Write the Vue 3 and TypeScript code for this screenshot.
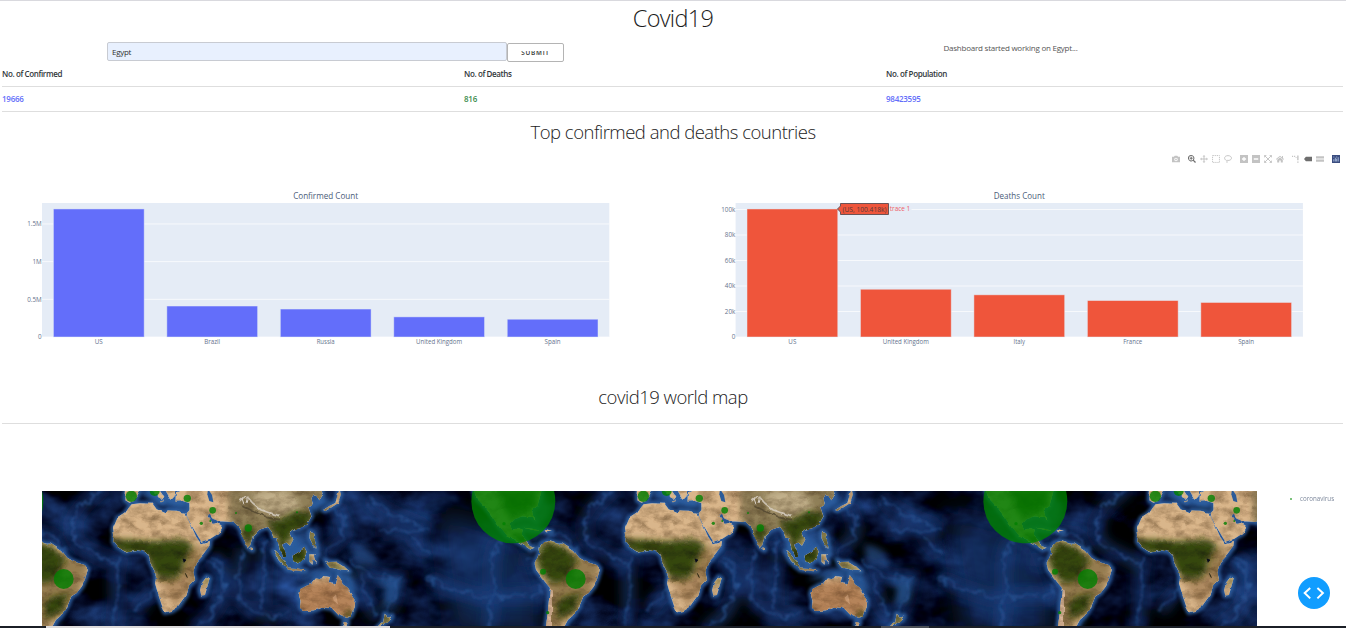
<script setup lang="ts">
interface Datum { name: string; value: number }
interface Tick { label: string; value: number }
interface Chart {
  title: string
  color: string
  left: number
  max: number
  bars: Datum[]
  ticks: Tick[]
}

const stats = [
  { label: 'No. of Confirmed', value: '19666', tone: 'blue' },
  { label: 'No. of Deaths', value: '816', tone: 'green' },
  { label: 'No. of Population', value: '98423595', tone: 'blue' },
]

const charts: Chart[] = [
  {
    title: 'Confirmed Count', color: '#636efa', left: 42, max: 1.778,
    bars: [
      { name: 'US', value: 1.699 }, { name: 'Brazil', value: 0.411 }, { name: 'Russia', value: 0.371 },
      { name: 'United Kingdom', value: 0.267 }, { name: 'Spain', value: 0.236 },
    ],
    ticks: [{ label: '0', value: 0 }, { label: '0.5M', value: 0.5 }, { label: '1M', value: 1 }, { label: '1.5M', value: 1.5 }],
  },
  {
    title: 'Deaths Count', color: '#ef553b', left: 62.6, max: 105.1,
    bars: [
      { name: 'US', value: 100.418 }, { name: 'United Kingdom', value: 37.46 }, { name: 'Italy', value: 33.07 },
      { name: 'France', value: 28.6 }, { name: 'Spain', value: 27.1 },
    ],
    ticks: [
      { label: '0', value: 0 }, { label: '20k', value: 20 }, { label: '40k', value: 40 },
      { label: '60k', value: 60 }, { label: '80k', value: 80 }, { label: '100k', value: 100 },
    ],
  },
]
const plotTop = 35
const plotH = 134
const plotW = 567.3
const step = plotW / 5
const yOf = (c: Chart, v: number) => plotTop + plotH - (v / c.max) * plotH
const labelWidth: Record<string, number> = { US: 8, Brazil: 16, Russia: 18, 'United Kingdom': 46, Spain: 16, Italy: 11.5, France: 19 }

/* World map: one world is 1536 units wide, a third of a pixel each. */
const WORLD = 1536
const grounds = [0, WORLD, WORLD * 2]
const worlds = [-WORLD, 0, WORLD, WORLD * 2]

const lands = [
  // Africa
  'M269 40L294 37L332 38L344 55L372 67L377 58L404 59L429 65L436 80L449 107L463 138L476 157L504 150L502 168L484 192L461 217L454 242L459 267L440 287L434 312L409 347L389 360L369 364L361 347L349 312L339 277L342 257L336 237L326 217L321 195L309 182L284 177L249 182L226 167L214 152L216 132L213 112L226 82L249 67L262 48Z',
  // Madagascar
  'M494 257L503 262L489 312L478 314L474 298L480 275Z',
  // Iberia and southern Europe
  'M252 -6L292 -6L286 14L276 30L262 35L250 28Z',
  'M322 -6L350 -6L364 14L356 24L344 9Z',
  'M368 -6L400 -6L398 16L388 26L378 12Z',
  'M356 26L366 26L363 33L354 30Z',
  // Anatolia, Arabia, Iran and India
  'M402 4L430 -6L700 -6L700 110L676 108L652 116L632 136L625 162L618 170L607 148L594 112L578 95L560 92L530 91L512 83L499 68L494 76L512 98L527 96L542 107L532 126L505 143L478 152L468 136L450 106L436 78L434 66L442 58L442 36L424 31L400 32Z',
  // East and South-East Asia
  'M650 -6L838 -6L842 12L832 28L824 12L815 10L808 22L812 38L800 52L808 76L794 101L774 112L749 116L746 128L754 146L744 164L730 152L720 158L728 176L733 194L724 196L713 176L706 142L694 140L688 120L678 108L655 114Z',
  'M844 57L862 45L880 36L889 4L893 -4L897 10L888 37L870 48L850 60Z',
  'M694 180L708 188L728 212L738 227L728 228L710 208Z',
  'M752 194L772 182L788 170L794 182L784 205L766 218L754 210Z',
  'M733 229L765 231L792 239L778 241L738 236Z',
  'M802 190L826 190L816 196L822 216L812 205L808 218L802 212Z',
  'M804 120L813 130L820 154L824 173L812 160L803 142Z',
  'M850 206L862 213L884 212L904 224L922 241L902 239L884 234L864 230L856 221Z',
  'M625 168L633 172L632 178L626 176Z',
  // Australia and New Zealand
  'M774 295L794 284L808 279L822 262L834 265L842 254L864 258L860 273L878 284L887 252L895 262L902 280L918 290L930 310L940 326L938 348L928 374L916 380L892 374L870 352L842 348L816 358L786 360L774 350L776 330L770 310Z',
  'M905 393L917 394L912 410L904 406Z',
  'M1028 368L1038 377L1050 374L1046 386L1030 394L1016 410L1006 410L1024 392Z',
  // North and Central America
  'M1294 -6L1500 -6L1486 46L1478 50L1470 66L1480 90L1470 78L1444 76L1418 84L1404 100L1412 118L1430 112L1442 116L1438 134L1450 145L1462 165L1478 171L1466 176L1444 161L1418 146L1394 136L1372 108L1346 70L1326 44L1304 22Z',
  // Caribbean
  'M1445 110L1474 114L1496 120L1478 118Z',
  'M1508 117L1530 122L1512 124Z',
  // South America
  'M1490 170L1504 154L1524 150L1548 158L1562 158L1596 180L1612 200L1632 212L1664 222L1674 234L1666 262L1656 286L1640 306L1624 316L1612 346L1592 374L1578 386L1560 420L1510 420L1518 362L1524 290L1512 277L1498 258L1482 236L1478 218L1486 200L1492 186Z',
]

const greens = [
  'M205 143L270 146L340 150L410 145L438 150L455 170L440 190L428 210L420 245L395 266L355 262L330 240L318 200L300 190L240 186L205 160Z',
  'M600 112L625 105L640 118L628 158L615 160L602 135Z',
  'M680 88L720 86L760 60L815 70L796 108L752 122L750 152L730 150L726 190L712 180L706 140L688 122Z',
  'M690 170L796 165L800 215L750 226L728 230Z',
  'M796 118L826 150L826 176L806 164Z',
  'M845 200L926 244L870 234Z',
  'M915 365L934 355L928 382L900 376Z',
  'M1020 370L1052 370L1020 412Z',
  'M1366 -6L1490 -6L1470 60L1400 75L1380 40Z',
  'M1410 124L1450 140L1466 175L1420 148Z',
  'M1486 180L1510 154L1560 162L1610 206L1590 232L1572 270L1534 278L1516 265L1484 222Z',
  'M1560 318L1618 306L1600 352L1556 386L1540 350Z',
  'M486 260L502 262L494 290Z',
]

const ridges = [
  'M190 -10C110 40 80 95 98 140C112 180 170 190 222 220',
  'M236 196C205 250 240 310 216 410',
  'M500 215C560 240 560 300 512 370C490 390 470 400 455 420',
  'M600 170C605 240 570 290 600 330C640 370 690 390 740 360',
  'M668 150C664 230 662 290 660 345',
  'M512 200C556 220 552 260 536 290',
  'M336 290C320 315 300 335 285 360',
  'M880 40C900 90 920 120 890 150C860 168 850 185 842 200',
  'M980 20C1020 60 1070 80 1160 115',
  'M1010 120L1080 115L1150 118M1110 140L1160 190',
  'M930 210C970 250 1010 270 1070 260L1056 330L1036 372',
  'M956 250C960 310 980 350 1010 380',
  'M1160 260C1200 290 1260 300 1310 320L1460 316',
  'M1370 150C1330 230 1370 330 1336 420',
  'M1440 206L1478 207M1470 335L1506 290',
  'M1474 160C1510 130 1540 125 1574 138C1582 160 1594 170 1612 182',
]

const cases = [
  { x: 268, y: 16, r: 17 }, { x: 338, y: 0, r: 15 }, { x: 436, y: 22, r: 11 },
  { x: 512, y: 58, r: 10 }, { x: 478, y: 97, r: 5 }, { x: 582, y: 66, r: 3 },
  { x: 619, y: 111, r: 11 }, { x: 765, y: 64, r: 3 }, { x: 1414, y: 31, r: 126 },
  { x: 1386, y: 98, r: 5 }, { x: 1503, y: 242, r: 9 }, { x: 1601, y: 264, r: 30 },
  { x: 1517, y: 365, r: 5 }, { x: 505, y: 90, r: 3 },
]
</script>

<template>
  <main class="page">
    <h1>Covid19</h1>
    <section class="controls">
      <form class="search" @submit.prevent>
        <input class="country" type="text" value="Egypt" />
        <button class="submit"><span>SUBMIT</span></button>
      </form>
      <p class="status">Dashboard started working on Egypt...</p>
    </section>

    <table class="stats">
      <colgroup><col class="c1" /><col class="c2" /><col /></colgroup>
      <thead><tr><th v-for="s in stats" :key="s.label">{{ s.label }}</th></tr></thead>
      <tbody><tr><td v-for="s in stats" :key="s.label" :class="s.tone">{{ s.value }}</td></tr></tbody>
    </table>

    <h2>Top confirmed and deaths countries</h2>

    <div class="modebar">
      <svg class="ic gap" viewBox="0 0 10 10"><path fill-rule="evenodd" d="M0 2.2h2.4L3.4.8h3.2l1 1.4H10v7H0zM5 3.4a2.2 2.2 0 1 0 0 4.4 2.2 2.2 0 0 0 0-4.4zm0 1.1a1.1 1.1 0 1 1 0 2.2 1.1 1.1 0 0 1 0-2.2z" /></svg>
      <svg class="ic on" viewBox="0 0 10 10"><path fill-rule="evenodd" d="M4 0a4 4 0 1 0 2.2 7.3L8.8 10 10 8.8 7.3 6.2A4 4 0 0 0 4 0zm0 1.2a2.8 2.8 0 1 1 0 5.6 2.8 2.8 0 0 1 0-5.6zM3.4 2.2v1.2H2.2v1.2h1.2v1.2h1.2V4.6h1.2V3.4H4.6V2.2z" /></svg>
      <svg class="ic" viewBox="0 0 10 10"><path d="M5 0l1.8 2H5.6v2.4H8V3.2L10 5 8 6.8V5.6H5.6V8h1.2L5 10 3.2 8h1.2V5.6H2v1.2L0 5l2-1.8v1.2h2.4V2H3.2z" /></svg>
      <svg class="ic" viewBox="0 0 10 10"><rect class="line dash" x=".7" y=".7" width="8.6" height="8.6" /></svg>
      <svg class="ic gap" viewBox="0 0 10 10"><path class="line" d="M3.2 6.8C-.6 5.5 0 .8 5 .8s6 5 1.3 5.9c-1.8.3-3-.5-2.8.8.2 1 .7 1 .2 2.3" /></svg>
      <svg class="ic" viewBox="0 0 10 10"><path fill-rule="evenodd" d="M0 0h10v10H0zM4.2 2.4v1.8H2.4v1.6h1.8v1.8h1.6V5.8h1.8V4.2H5.8V2.4z" /></svg>
      <svg class="ic" viewBox="0 0 10 10"><path fill-rule="evenodd" d="M0 0h10v10H0zM2.2 4.2v1.6h5.6V4.2z" /></svg>
      <svg class="ic" viewBox="0 0 10 10"><path class="line" d="M1 1l8 8M9 1L1 9M.5 3V.5H3M7 .5h2.5V3M.5 7v2.5H3M7 9.5h2.5V7" /></svg>
      <svg class="ic gap" viewBox="0 0 10 10"><path d="M5 .8L10 5l-.7.8L5 2.2.7 5.8 0 5zM7.5 1.2h1.2V4l-1.2-.8zM5 3L8.5 6v3.4H6V6.8H4v2.6H1.5V6z" /></svg>
      <svg class="ic" viewBox="0 0 10 10"><path d="M0 1h1.4v1.4H0zM2.6 1H4v1.4H2.6zM6.5 .5h1.7v6.2H6.5zM6.5 8h1.7v1.7H6.5zM4.6 2.5h1v1.2h-1z" /></svg>
      <svg class="ic on" viewBox="0 0 10 10"><path d="M0 5l2.4-2.7H10v5.4H2.4z" /></svg>
      <svg class="ic gap" viewBox="0 0 10 10"><path d="M0 1.5h10v2.8H0zM0 5.7h10v2.8H0z" /></svg>
      <svg class="ic logo" viewBox="0 0 10 10"><rect width="10" height="10" fill="#3b4d80" /><path d="M1.8 5.2h1V8h-1zM3.6 3.4h1V8h-1zM5.4 4.6h1V8h-1zM7.2 2.8h1V8h-1zM1.8 2h1v1h-1zM5.4 2h1v1h-1z" fill="#b9cdea" /></svg>
    </div>

    <section class="charts">
      <svg v-for="(c, ci) in charts" :key="c.title" class="chart" width="673" height="190" viewBox="0 0 673 190">
        <g :transform="`translate(${c.left} 0)`">
          <text class="chart-title" :x="plotW / 2" y="31" text-anchor="middle" :textLength="ci ? 51 : 65" lengthAdjust="spacingAndGlyphs">{{ c.title }}</text>
          <rect x="0" :y="plotTop" :width="plotW" :height="plotH" fill="#e5ecf6" />
          <g v-for="t in c.ticks" :key="t.label">
            <line x1="0" :x2="plotW" :y1="yOf(c, t.value)" :y2="yOf(c, t.value)" stroke="#fff" stroke-width=".7" />
            <text class="tick" x="-.3" :y="yOf(c, t.value) + 2.2" text-anchor="end">{{ t.label }}</text>
          </g>
          <g v-for="(b, i) in c.bars" :key="b.name">
            <rect :x="i * step + 11.4" :y="yOf(c, b.value)" :width="step * 0.8" :height="plotTop + plotH - yOf(c, b.value)" :fill="c.color" stroke="#e5ecf6" stroke-opacity=".6" stroke-width=".8" />
            <text class="tick" :x="(i + 0.5) * step" y="176" text-anchor="middle" :textLength="labelWidth[b.name]" lengthAdjust="spacingAndGlyphs">{{ b.name }}</text>
          </g>
          <g v-if="ci === 1">
            <path d="M101.9 41L104.9 38V35.5H152.9V46.5H104.9V44Z" fill="#ef553b" stroke="#6b5357" />
            <text class="hover" x="106.9" y="43.6" textLength="44" lengthAdjust="spacingAndGlyphs">(US, 100.418k)</text>
            <rect x="153.9" y="36" width="22" height="10" fill="#e5ecf6" />
            <text class="hover trace" x="154.2" y="43.4" textLength="20.5" lengthAdjust="spacingAndGlyphs">trace 1</text>
          </g>
        </g>
      </svg>
    </section>

    <h2 class="map-title">covid19 world map</h2>
    <hr />

    <section class="map-row">
      <svg class="map" width="1215" height="135" viewBox="0 0 3645 405">
        <defs>
          <filter id="sea" x="0" y="0" width="100%" height="100%" color-interpolation-filters="sRGB">
            <feTurbulence type="fractalNoise" baseFrequency=".006 .009" numOctaves="4" seed="12" />
            <feColorMatrix values=".3 0 0 0 -.13  .6 0 0 0 -.25  1.0 0 0 0 -.34  0 0 0 0 1" />
          </filter>
          <filter id="grain" x="0" y="-20" width="1720" height="460" filterUnits="userSpaceOnUse" color-interpolation-filters="sRGB">
            <feTurbulence type="fractalNoise" baseFrequency=".025 .04" numOctaves="4" seed="5" result="n" />
            <feColorMatrix in="n" values=".6 0 0 0 .63  .65 0 0 0 .59  .75 0 0 0 .52  0 0 0 0 1" result="m" />
            <feBlend in="SourceGraphic" in2="m" mode="multiply" result="b" />
            <feComposite in="b" in2="SourceGraphic" operator="in" />
          </filter>
          <filter id="rough" x="0" y="-20" width="1720" height="460" filterUnits="userSpaceOnUse">
            <feTurbulence type="fractalNoise" baseFrequency=".035" numOctaves="3" seed="8" />
            <feDisplacementMap in="SourceGraphic" scale="10" xChannelSelector="R" yChannelSelector="G" />
            <feGaussianBlur stdDeviation="1" />
          </filter>
          <filter id="ridge" x="0" y="-20" width="1720" height="460" filterUnits="userSpaceOnUse">
            <feTurbulence type="fractalNoise" baseFrequency=".03" numOctaves="3" seed="3" />
            <feDisplacementMap in="SourceGraphic" scale="45" xChannelSelector="R" yChannelSelector="G" />
            <feGaussianBlur stdDeviation="3.5" />
          </filter>
          <filter id="soft" x="-30%" y="-30%" width="160%" height="160%"><feGaussianBlur stdDeviation="9" /></filter>
          <filter id="haze" x="1000" y="-80" width="640" height="600" filterUnits="userSpaceOnUse"><feGaussianBlur stdDeviation="40" /></filter>
          <filter id="broad" x="0" y="-60" width="1760" height="560" filterUnits="userSpaceOnUse"><feGaussianBlur stdDeviation="16" /></filter>
          <filter id="halo" x="-20" y="-40" width="1760" height="500" filterUnits="userSpaceOnUse"><feGaussianBlur stdDeviation="4" /></filter>
          <clipPath id="coast"><path v-for="d in lands" :key="d" :d="d" /></clipPath>
          <g id="shelves">
            <path d="M1180 60L1440 130L1500 300L1500 430L1230 430Z" fill="#14366a" opacity=".75" filter="url(#haze)" />
            <g filter="url(#broad)" fill="none" stroke="#1a4080" stroke-opacity=".6" stroke-width="40">
              <path v-for="d in ridges" :key="d" :d="d" />
            </g>
            <g filter="url(#ridge)" fill="none" stroke="#2c5c9c" stroke-opacity=".6" stroke-width="6">
              <path v-for="d in ridges" :key="d" :d="d" />
            </g>
            <g filter="url(#soft)" fill="#2b5c9d">
              <path d="M690 150L760 130L800 180L770 235L700 210Z" />
              <path d="M790 30L840 10L870 30L812 70Z" />
              <path d="M750 120L830 110L840 200L800 220L760 190Z" opacity=".6" />
              <path d="M760 265L820 235L860 232L930 250L950 310L925 300L885 255Z" />
              <path d="M930 160C980 165 1010 190 1000 225L940 215Z" opacity=".6" />
              <path d="M990 265L1080 262L1060 330L1020 350L1030 290Z" opacity=".7" />
              <path d="M1590 365L1610 350L1575 410L1545 415Z" />
              <path d="M280 -6L430 -6L440 60L340 40Z" />
              <path d="M1410 70L1500 0L1530 60L1480 140L1410 130Z" opacity=".7" />
            </g>
            <g filter="url(#halo)" fill="#2d5f9f" stroke="#2d5f9f" stroke-width="16" stroke-linejoin="round" opacity=".9">
              <path v-for="d in lands" :key="d" :d="d" />
            </g>
          </g>
          <g id="continents">
            <g filter="url(#rough)">
              <g filter="url(#grain)">
                <g clip-path="url(#coast)">
                  <rect y="-10" width="1720" height="430" fill="#d9b68b" />
                  <path d="M560 -10H860V130H560Z" fill="#8f7f58" filter="url(#soft)" />
                  <path d="M630 10L690 -6L760 12L775 60L700 75L650 55Z" fill="#c2b18c" filter="url(#soft)" />
                  <path d="M1290 -10H1500V180H1360Z" fill="#a4a26a" filter="url(#soft)" />
                  <path d="M1550 190L1680 210L1640 320L1540 420H1500L1520 290Z" fill="#957b4f" filter="url(#soft)" />
                  <path d="M760 280L900 265L950 330L920 390L760 370Z" fill="#b5845a" filter="url(#soft)" />
                  <path d="M420 190L480 160L470 270L430 310Z" fill="#9b7e50" filter="url(#soft)" />
                  <path d="M350 255L450 240L440 310L400 350L370 300Z" fill="#b08c62" filter="url(#soft)" />
                  <g fill="#34460a" filter="url(#soft)"><path v-for="d in greens" :key="d" :d="d" /></g>
                  <path d="M1516 280L1530 300L1530 410H1512Z" fill="#d8b699" />
                </g>
              </g>
              <path d="M592 30L606 18L620 22L632 36L656 56L690 68L714 74" fill="none" stroke="#ddd6cc" stroke-width="5" stroke-opacity=".75" />
              <path d="M600 22L606 40M618 16L612 36" fill="none" stroke="#ddd6cc" stroke-width="3" />
              <path d="M604 46L640 64L676 80L714 86" fill="none" stroke="#4b422c" stroke-width="5" stroke-opacity=".7" />
            </g>
            <path d="M498 -6L510 12L514 34L502 30L496 10Z" fill="#2c5b99" />
            <path d="M872 320L882 310L888 340L876 330Z" fill="#edc09a" opacity=".4" />
            <path d="M423 204L432 207L426 214Z" fill="#050818" stroke="#050818" stroke-width="2" />
            <path d="M430 247L436 260" stroke="#26240f" stroke-width="3" />
          </g>
        </defs>
        <rect width="3645" height="405" fill="#02031a" />
        <g class="water">
          <rect v-for="x in grounds" :key="x" :x="x" y="0" :width="WORLD" height="405" filter="url(#sea)" />
        </g>
        <use v-for="x in worlds" :key="'s' + x" href="#shelves" :x="x" />
        <use v-for="x in worlds" :key="'c' + x" href="#continents" :x="x" />
        <g v-for="x in worlds" :key="'d' + x" fill="#008000" fill-opacity=".8">
          <circle v-for="(c, i) in cases" :key="i" :cx="x + c.x" :cy="c.y" :r="c.r" />
        </g>
      </svg>
      <div class="legend"><i></i><span>coronavirus</span></div>
    </section>

    <footer class="taskbar"><i class="dark start"></i><i class="light"></i><i class="dark rest"></i><i class="grey"></i><i class="dark end"></i></footer>

    <button class="debug" aria-label="Debug menu">
      <svg width="32" height="32" viewBox="0 0 32 32"><path d="M12.2 11L6.7 16l5.5 5.4M19.4 11l5.5 5-5.5 5.4" fill="none" stroke="#fff" stroke-width="2" /></svg>
    </button>
  </main>
</template>

<style>
html, body { margin: 0; overflow: hidden; background: #fff; }
</style>

<style scoped>
.page {
  box-sizing: border-box;
  width: 1346px;
  height: 628px;
  overflow: hidden;
  position: relative;
  display: flex;
  flex-direction: column;
  border-top: 1px solid #d9d9de;
  background: #fff;
  color: #32373b;
  font-family: "Open Sans", sans-serif;
  font-size: 8px;
}
h1, h2, p { margin: 0; }
h1 { height: 35px; line-height: 34px; font-size: 23.5px; font-weight: 330; text-align: center; letter-spacing: -.7px; color: #1c1c1c; }
h2 { flex: none; font-size: 18.5px; font-weight: 330; text-align: center; letter-spacing: -.5px; color: #1c1c1c; height: 39px; line-height: 40px; }
.controls { display: grid; grid-template-columns: 671px 1fr; height: 29px; padding-top: 5px; box-sizing: border-box; }
.search { display: flex; justify-content: center; }
.country { box-sizing: border-box; width: 400px; height: 19px; margin-top: 1px; padding: 0 4px; border: 1px solid #c8cbd2; border-radius: 2px; background: #e8f0fe; font: 8px "Open Sans", sans-serif; letter-spacing: -.3px; color: #333; }
.submit { box-sizing: border-box; width: 57px; height: 19px; margin-top: 2px; padding: 0; border: 1px solid #b4b4b4; border-radius: 2px; background: #fff; display: flex; align-items: center; justify-content: center; }
.submit span { display: block; height: 4px; overflow: hidden; font: 600 6.4px/4px "Open Sans", sans-serif; letter-spacing: .75px; color: #333; }
.status { padding-left: 4px; text-align: center; line-height: 14px; font-size: 8px; letter-spacing: -.23px; color: #555; }
.stats { width: 1341px; margin-left: 2px; border-collapse: collapse; table-layout: fixed; }
.c1 { width: 462px; }
.c2 { width: 422px; }
.stats th, .stats td { height: 24px; padding: 0; border-bottom: 1px solid #dedede; text-align: left; font-size: 8px; line-height: 10px; font-weight: 600; letter-spacing: -.38px; }
.stats thead th { height: 18px; padding-bottom: 3px; }
.stats td { font-size: 8px; letter-spacing: -.25px; }
.blue { color: #636efa; }
.green { color: #3a8a4a; }
.modebar { height: 16px; display: flex; align-items: center; justify-content: flex-end; gap: 4px; padding-right: 6px; }
.ic { width: 8px; height: 8px; fill: #c3c3c3; }
.ic.gap { margin-right: 4px; }
.ic.on { fill: #6e6e6e; }
.line { fill: none; stroke: #c3c3c3; stroke-width: 1.2; }
.dash { stroke-dasharray: 1.6 1; }
.charts { display: flex; height: 208px; padding-top: 1px; }
.chart { flex: none; overflow: visible; font-family: "Open Sans", sans-serif; }
.chart-title { font-size: 8.4px; fill: #4a5b78; }
.tick { font-size: 6.3px; fill: #65738d; }
.hover { font-size: 6.8px; fill: #553a3a; }
.trace { fill: #ef5f66; }
.map-title { height: 47px; line-height: 42px; }
hr { flex: none; width: 1341px; height: 1px; margin: 0 0 0 2px; border: 0; background: #dedede; }
.map-row { display: flex; padding: 67px 0 0 42px; }
.map { display: block; flex: none; }
.legend { display: flex; align-items: center; height: 15px; gap: 8px; margin-left: 33px; font-size: 6.2px; color: #7c879b; }
.legend i { width: 2px; height: 2px; border-radius: 50%; background: #4fae4f; }
.taskbar { display: flex; flex: none; height: 2px; width: 1346px; }
.dark { background: #1b1f26; }
.start { width: 46px; }
.light { width: 344px; background: #dcdada; }
.rest { width: 491px; }
.grey { width: 48px; background: #4b4f55; }
.end { flex: 1; }
.debug { position: absolute; left: 1298px; top: 576px; width: 32px; height: 32px; padding: 0; border: 0; border-radius: 50%; background: #119dff; }
.debug svg { display: block; }
</style>
